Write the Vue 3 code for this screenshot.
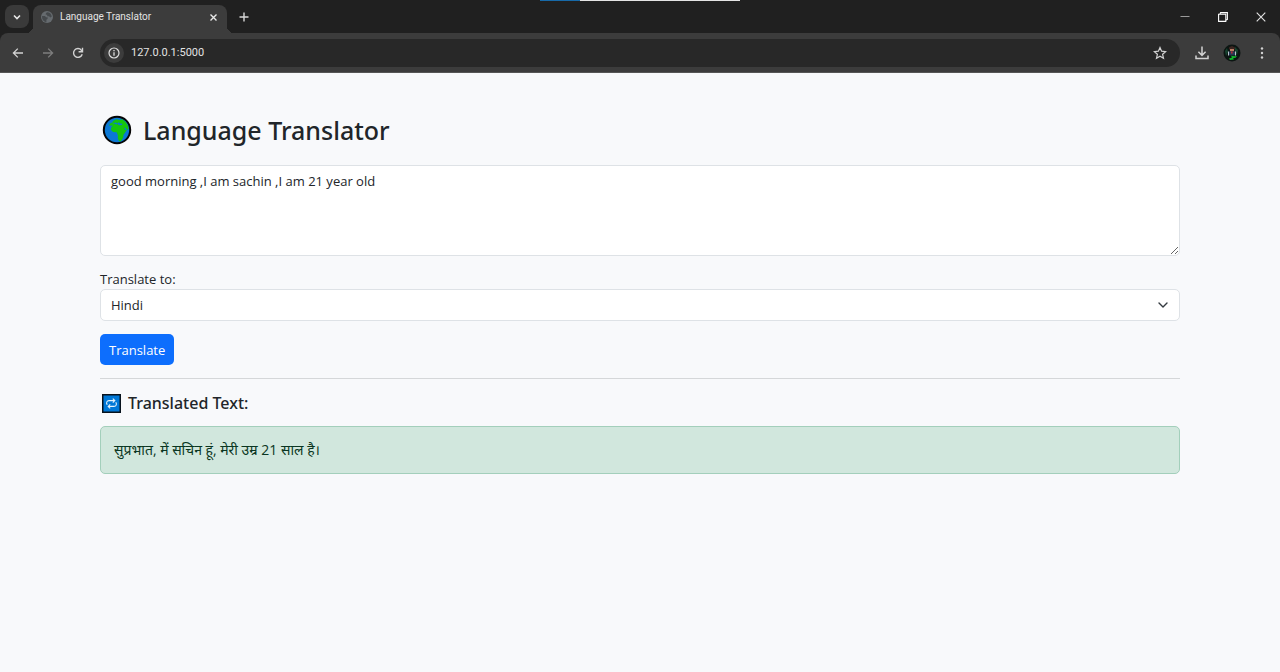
<script setup>
import { ref } from 'vue'

const address = ref('127.0.0.1:5000')
const source = ref('good morning ,I am sachin ,I am 21 year old')
const language = ref('Hindi')
const languages = ['Hindi']
const translated = ref('सुप्रभात, में सचिन हूं, मेरी उम्र 21 साल है।')
</script>

<template>
  <div class="window">
    <div class="progress" aria-hidden="true"><span></span></div>

    <header class="browser">
      <div class="tabstrip">
        <button class="tab-search" aria-label="Search tabs">
          <svg width="10" height="10" viewBox="0 0 10 10"><path d="M2 3.5l3 3 3-3" fill="none" stroke="#e8e8e8" stroke-width="1.6" /></svg>
        </button>
        <div class="tab">
          <svg width="12" height="12" viewBox="0 0 12 12">
            <circle cx="6" cy="6" r="6" fill="#666b6f" />
            <path d="M1 5h3l1 1.2h1.6v1.6L5.4 8.8v2.4C2.6 10.8.8 8.7 1 5zM6 1.2c2.5 0 4.4 1.6 4.8 4.2L9.4 6.6 8 5.2H6.2V3.8H4.8V2.6z" fill="#45494c" />
          </svg>
          <span class="tab-title">Language Translator</span>
          <button class="plain" aria-label="Close tab">
            <svg width="9" height="9" viewBox="0 0 9 9"><path d="M1.5 1.5l6 6M7.5 1.5l-6 6" stroke="#e8e8e8" stroke-width="1.4" /></svg>
          </button>
        </div>
        <button class="plain new-tab" aria-label="New tab">
          <svg width="10" height="10" viewBox="0 0 10 10"><path d="M5 .5v9M.5 5h9" stroke="#d8d8d8" stroke-width="1.4" /></svg>
        </button>
        <div class="window-controls">
          <button class="plain" aria-label="Minimize">
            <svg width="10" height="10" viewBox="0 0 10 10"><path d="M.5 4.5h9" stroke="#9a9a9a" /></svg>
          </button>
          <button class="plain" aria-label="Restore">
            <svg width="10" height="10" viewBox="0 0 10 10"><path d="M.6 2.2h7.2v7.2H.6zM2 2L2.6.6h6.8v6.8L8 8" fill="none" stroke="#fff" stroke-width="1.1" /></svg>
          </button>
          <button class="plain" aria-label="Close window">
            <svg width="10" height="10" viewBox="0 0 10 10"><path d="M.7.7l8.6 8.6M9.3.7L.7 9.3" stroke="#e4e4e4" stroke-width="1.1" /></svg>
          </button>
        </div>
      </div>

      <div class="toolbar">
        <div class="nav">
          <button class="plain" aria-label="Back">
            <svg width="12" height="12" viewBox="0 0 12 12"><path d="M11 6H1.6M5.8 1.6L1.4 6l4.4 4.4" fill="none" stroke="#d2d2d2" stroke-width="1.3" /></svg>
          </button>
          <button class="plain" aria-label="Forward" disabled>
            <svg width="12" height="12" viewBox="0 0 12 12"><path d="M1 6h9.4M6.2 1.6L10.6 6l-4.4 4.4" fill="none" stroke="#7d7d7d" stroke-width="1.3" /></svg>
          </button>
          <button class="plain" aria-label="Reload">
            <svg width="12" height="12" viewBox="0 0 12 12"><path d="M10.2 7.2A4.4 4.4 0 1 1 9.4 3.2L10.6 4.6" fill="none" stroke="#d2d2d2" stroke-width="1.4" /><path d="M11.2.8v4.6H6.6V4h3.2V.8z" fill="#d2d2d2" /></svg>
          </button>
        </div>
        <div class="omnibox">
          <button class="site-info" aria-label="View site information">
            <svg width="12" height="12" viewBox="0 0 12 12"><circle cx="6" cy="6" r="5" fill="none" stroke="#dedede" stroke-width="1.2" /><path d="M6 5.2v3.6M6 3v1.3" stroke="#dedede" stroke-width="1.3" /></svg>
          </button>
          <input v-model="address" aria-label="Address" spellcheck="false" />
          <button class="plain" aria-label="Bookmark this page">
            <svg width="14" height="14" viewBox="0 0 14 14"><path d="M7 1.5l1.6 3.7 4 .4-3 2.7.9 4L7 10.2l-3.5 2.1.9-4-3-2.7 4-.4z" fill="none" stroke="#d2d2d2" stroke-width="1.2" /></svg>
          </button>
        </div>
        <div class="actions">
          <button class="plain" aria-label="Downloads">
            <svg width="14" height="14" viewBox="0 0 14 14"><path d="M7 .5v8.6M3.4 5.8L7 9.4l3.6-3.6M1 9.6v2.8h12V9.6" fill="none" stroke="#d2d2d2" stroke-width="1.5" /></svg>
          </button>
          <button class="plain" aria-label="Profile">
            <svg width="18" height="18" viewBox="0 0 18 18">
              <circle cx="9" cy="9" r="8.5" fill="#0c1512" />
              <path d="M2 7l2-3 1 4-2 4zM12 3l3 3-1 5-2-3z" fill="#17432f" />
              <path d="M6 3.2L9 2l3 1.4v2H6z" fill="#3b2520" />
              <path d="M7 5h4v2.4H7z" fill="#b77d65" />
              <path d="M6 7.4h6v4H6z" fill="#273752" />
              <path d="M5 7.6h1v4H5zM12 7.6h1v4h-1z" fill="#b9c4ce" />
              <path d="M8 7.6h1.6v2H8z" fill="#b52c39" />
              <path d="M8 11.8l4 .4 2-.4-1.4 2-2.6.4 1 1.2-4 .6-1-1.4 3-1z" fill="#12b52c" />
            </svg>
          </button>
          <button class="plain menu" aria-label="Menu">
            <svg width="4" height="14" viewBox="0 0 4 14" fill="#d2d2d2"><circle cx="2" cy="2.5" r="1.2" /><circle cx="2" cy="7" r="1.2" /><circle cx="2" cy="11.5" r="1.2" /></svg>
          </button>
        </div>
      </div>
    </header>

    <main class="page">
      <h1>
        <svg width="30" height="30" viewBox="0 0 30 30">
          <circle cx="15" cy="15" r="13.2" fill="#0b78d4" stroke="#050505" stroke-width="2" />
          <path d="M7 10.5l1.6-2.4 2-.6.2-1.6 3.6-1.6 3.2.6 2.6-.6 3.2 2.4 2.4 3.6.8 3.6-1.6 1.2-1.8-2.6-1 .4 1 2h1.6l-2 3-1.4 2.2-.2 2.4-2.2 3.4-2 .4-1.2-3.4.2-2.4-1.4-3.2-3.6-.2-2-2 .2-2.6 1.8-1.8z" fill="#16c60c" />
          <path d="M10.4 9.4l2-.8 1.6 1 1.4-.6 1.6 1.2 3-.2.4-1.2-2.6-.4-.8-1.4-1.4 1.4-2-.8-1.6.4z" fill="#0b78d4" />
        </svg>
        <span>Language Translator</span>
      </h1>

      <form @submit.prevent>
        <textarea v-model="source" aria-label="Text to translate" spellcheck="false"></textarea>
        <label for="language">Translate to:</label>
        <div class="select-wrap">
          <select id="language" v-model="language">
            <option v-for="name in languages" :key="name">{{ name }}</option>
          </select>
          <svg class="chevron" width="10" height="10" viewBox="0 0 10 10"><path d="M1 3l4 4 4-4" fill="none" stroke="#343a40" stroke-width="1.4" stroke-linecap="round" stroke-linejoin="round" /></svg>
        </div>
        <button class="submit" type="submit">Translate</button>
      </form>

      <section class="result">
        <h2>
          <svg width="19" height="19" viewBox="0 0 19 19">
            <path d="M.75.75h17.5v17.5H.75z" fill="#0078d7" stroke="#08131d" stroke-width="1.5" />
            <path d="M5.2 10.8C3.8 8.6 5 6.6 7 6.6h5.6M10.8 4.6l2 2-2 2M13.8 8.2c1.4 2.2.2 4.2-1.8 4.2H6.4M8.2 10.4l-2 2 2 2" fill="none" stroke="#e6f3fc" stroke-width="1.1" />
          </svg>
          <span>Translated Text:</span>
        </h2>
        <p lang="hi">{{ translated }}</p>
      </section>
    </main>
  </div>
</template>

<style>
body {
  margin: 0;
  background: #f8f9fb;
}
</style>

<style scoped>
* {
  box-sizing: border-box;
}
.window {
  min-height: 100vh;
  background: #f8f9fb;
  color: #212529;
  font-family: "Segoe UI", "Open Sans", "Noto Sans", sans-serif;
  font-size: 13px;
  line-height: 20px;
}
svg {
  display: block;
  flex: none;
}
button,
input,
select,
textarea {
  font: inherit;
  color: inherit;
  margin: 0;
}
.progress {
  position: absolute;
  top: 0;
  left: 50%;
  width: 200px;
  height: 1px;
  margin-left: -100px;
  background: #e4e4e4;
}
.progress span {
  display: block;
  width: 20%;
  height: 1px;
  background: #1769a8;
}
.browser {
  background: #202020;
  font-family: Roboto, sans-serif;
}
.plain {
  display: flex;
  align-items: center;
  justify-content: center;
  border: 0;
  padding: 0;
  background: none;
}
.tabstrip {
  display: flex;
  align-items: center;
  height: 33px;
  padding-left: 5px;
}
.tab-search {
  display: grid;
  place-items: center;
  width: 24px;
  height: 23px;
  margin-right: 4px;
  border: 0;
  border-radius: 8px;
  padding: 0;
  background: #3a3a3a;
}
.tab {
  position: relative;
  display: flex;
  align-items: center;
  align-self: flex-end;
  gap: 7px;
  width: 194px;
  height: 28px;
  padding: 0 9px 4px 8px;
  border-radius: 8px 8px 0 0;
  background: #3c3c3c;
}
.tab::before,
.tab::after {
  content: "";
  position: absolute;
  bottom: 0;
  width: 7px;
  height: 7px;
}
.tab::before {
  right: 100%;
  background: radial-gradient(circle at 0 0, #202020 7px, #3c3c3c 7px);
}
.tab::after {
  left: 100%;
  background: radial-gradient(circle at 100% 0, #202020 7px, #3c3c3c 7px);
}
.tab-title {
  flex: 1;
  color: #e3e3e3;
  font-size: 10px;
}
.new-tab {
  width: 24px;
  height: 24px;
  margin-left: 5px;
}
.window-controls {
  display: flex;
  margin-left: auto;
}
.window-controls button {
  width: 38px;
  height: 32px;
}
.toolbar {
  display: flex;
  align-items: center;
  height: 40px;
  border-bottom: 1px solid #565656;
  border-radius: 8px 8px 0 0;
  background: #3c3c3c;
}
.nav {
  display: flex;
  gap: 6px;
  padding: 0 10px 0 6px;
}
.nav button {
  width: 24px;
  height: 24px;
}
.omnibox {
  display: flex;
  flex: 1;
  align-items: center;
  height: 28px;
  padding: 0 13px 0 4px;
  border-radius: 14px;
  background: #282828;
}
.site-info {
  display: grid;
  place-items: center;
  width: 20px;
  height: 20px;
  border: 0;
  border-radius: 50%;
  padding: 0;
  background: #3c3c3c;
}
.omnibox input {
  flex: 1;
  min-width: 0;
  border: 0;
  padding: 0 7px;
  outline: 0;
  background: none;
  color: #e3e3e3;
  font-size: 11px;
}
.actions {
  display: flex;
  align-items: center;
  gap: 14px;
  padding: 0 11px 0 15px;
}
.menu {
  width: 14px;
}
.page {
  padding: 39px 100px;
}
h1,
h2 {
  display: flex;
  align-items: center;
  margin: 0;
  font-family: "Segoe UI", "Noto Sans", sans-serif;
  font-weight: 500;
}
h1 {
  gap: 11px;
  padding-left: 2px;
  margin-bottom: 17px;
  font-size: 25px;
  line-height: 36px;
}
form {
  display: flex;
  flex-direction: column;
  align-items: flex-start;
}
textarea {
  width: 100%;
  height: 91px;
  margin-bottom: 13px;
  border: 1px solid #dee2e6;
  border-radius: 5px;
  padding: 5px 10px;
  outline: 0;
  background: #fff;
  resize: vertical;
}
.select-wrap {
  position: relative;
  width: 100%;
  margin-bottom: 13px;
}
select {
  display: block;
  width: 100%;
  height: 32px;
  border: 1px solid #dee2e6;
  border-radius: 5px;
  padding: 0 10px;
  background: #fff;
  appearance: none;
}
.chevron {
  position: absolute;
  top: 11px;
  right: 12px;
  pointer-events: none;
}
.submit {
  height: 31px;
  border: 0;
  border-radius: 5px;
  padding: 0 9px;
  background: #0d6efd;
  color: #fff;
}
.result {
  margin-top: 13px;
  border-top: 1px solid #d5d7d9;
  padding-top: 14px;
}
h2 {
  gap: 7px;
  padding-left: 2px;
  margin-bottom: 12px;
  font-size: 16px;
  line-height: 21px;
}
.result p {
  margin: 0;
  border: 1px solid #a3cfbb;
  border-radius: 5px;
  padding: 13px;
  background: #d1e7dd;
  color: #0a3622;
  font-size: 14px;
}
</style>
